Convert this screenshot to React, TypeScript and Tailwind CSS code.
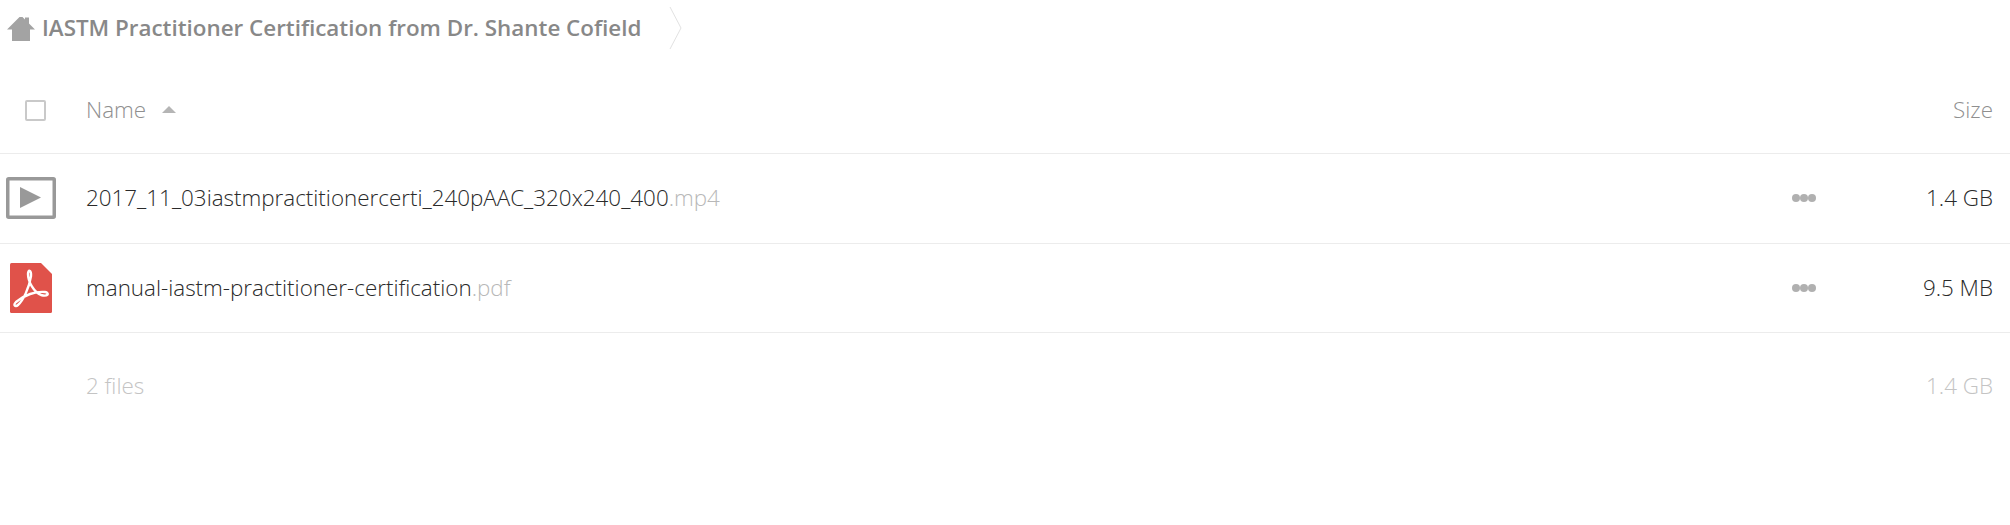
const rows = [
  { name: '2017_11_03iastmpractitionercerti_240pAAC_320x240_400', ext: '.mp4', size: '1.4 GB', kind: 'video' },
  { name: 'manual-iastm-practitioner-certification', ext: '.pdf', size: '9.5 MB', kind: 'pdf' },
];

function HomeIcon() {
  return (
    <svg width="28" height="25" viewBox="0 0 28 25">
      <path d="M0 13.5 L12.5 1 L15.5 1 L18 3.5 L18 1.5 L22 1.5 L22 7.5 L28 13.5 L23 13.5 L23 25 L5 25 L5 13.5 Z" fill="#a3a3a3" />
    </svg>
  );
}

function VideoIcon() {
  return (
    <svg width="50" height="42" viewBox="0 0 50 42">
      <rect x="1.75" y="1.75" width="46.5" height="38.5" rx="1" fill="none" stroke="#999999" strokeWidth="3.5" />
      <path d="M14 10 L35 20.5 L14 31 Z" fill="#999999" />
    </svg>
  );
}

function PdfIcon() {
  return (
    <svg width="42" height="50" viewBox="0 0 42 50">
      <path d="M1.5 0 L31 0 L42 11 L42 48.5 Q42 50 40.5 50 L1.5 50 Q0 50 0 48.5 L0 1.5 Q0 0 1.5 0 Z" fill="#e0524a" />
      <path
        d="M6 39 C3 42 5 44.5 8 42 C13 38 19.5 24 21 13 C21.5 7 18 6 18 11 C18 19 24 29 31 32 C38 34 40 30 35 29 C26 28 14 32 6 39 Z"
        fill="none"
        stroke="#ffffff"
        strokeWidth="2.4"
      />
    </svg>
  );
}

function Dots() {
  return (
    <div className="flex">
      <span className="w-[8px] h-[8px] rounded-full bg-[#b0b0b0]" />
      <span className="w-[8px] h-[8px] rounded-full bg-[#b0b0b0]" />
      <span className="w-[8px] h-[8px] rounded-full bg-[#b0b0b0]" />
    </div>
  );
}

export default function App() {
  return (
    <div className="w-[2010px] h-[525px] bg-white overflow-hidden font-['Open_Sans',sans-serif] font-light">
      <div className="h-[56px] flex items-center pl-[7px]">
        <HomeIcon />
        <div className="ml-[7px] text-[22.4px] font-semibold text-[#888888] whitespace-nowrap">
          IASTM Practitioner Certification from Dr. Shante Cofield
        </div>
        <svg width="14" height="44" viewBox="0 0 14 44" className="ml-[28px]">
          <path d="M1 1 L12 22 L1 43" fill="none" stroke="#e2e2e2" strokeWidth="1" />
        </svg>
      </div>

      <div className="h-[98px] flex items-center pt-[10px] border-b border-[#ececec]">
        <div className="w-[86px] flex pl-[25px] pt-[2px]">
          <div className="w-[21px] h-[21px] border-2 border-[#c9c9c9] rounded-[2px]" />
        </div>
        <div className="flex items-center text-[22.4px] text-[#8f8f8f]">
          Name
          <span className="ml-[16px] w-0 h-0 border-x-[7px] border-x-transparent border-b-[7px] border-b-[#b5b5b5]" />
        </div>
        <div className="ml-auto pr-[17px] text-[22.4px] text-[#8f8f8f]">Size</div>
      </div>

      {rows.map((r) => (
        <div key={r.name} className="h-[89.5px] flex items-center border-b border-[#ececec]">
          <div className="w-[86px] flex pl-[6px]">
            {r.kind === 'video' ? <VideoIcon /> : <div className="pl-[4px]"><PdfIcon /></div>}
          </div>
          <div className="text-[22.4px] text-[#2a2a2a] whitespace-nowrap">
            {r.name}
            <span className="text-[#b8b8b8]">{r.ext}</span>
          </div>
          <div className="ml-auto flex items-center">
            <Dots />
            <div className="w-[194px] pr-[17px] text-right text-[22.4px] text-[#2a2a2a]">{r.size}</div>
          </div>
        </div>
      ))}

      <div className="h-[105px] flex items-center pl-[86px] text-[22.4px] text-[#c4c4c4]">
        2 files
        <div className="ml-auto pr-[17px]">1.4 GB</div>
      </div>
    </div>
  );
}
